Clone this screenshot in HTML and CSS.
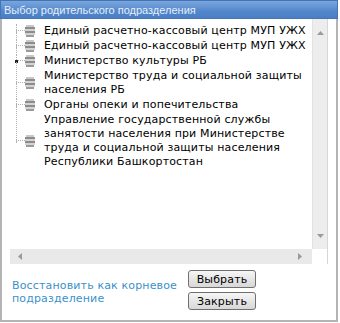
FILE: index.html
```html
<!DOCTYPE html>
<html>
<head>
<meta charset="utf-8">
<link rel="stylesheet" href="styles.css">
</head>
<body>
<div class="dialog">
  <div class="title">Выбор родительского подразделения</div>
  <div class="tree-box">
    <div class="tree-row">
      <div class="tree">
        <div class="node">
          <div class="conn"><div class="conn-top"></div><div class="conn-mid"></div><div class="conn-bot"></div></div>
          <svg class="icon" width="10" height="12" viewBox="0 0 10 12"><rect x="1" y="0" width="8" height="2" fill="#c8c8c8"/><rect x="0" y="2" width="10" height="2" fill="#8c8c8c"/><rect x="0" y="4" width="10" height="2" fill="#d4d4d4"/><rect x="0" y="6" width="10" height="2" fill="#8c8c8c"/><rect x="0" y="8" width="10" height="2" fill="#d4d4d4"/><rect x="1" y="10" width="8" height="2" fill="#9a9a9a"/></svg>
          <div class="label">Единый расчетно-кассовый центр МУП УЖХ</div>
        </div>
        <div class="node">
          <div class="conn"><div class="conn-top"></div><div class="conn-mid"></div><div class="conn-bot"></div></div>
          <svg class="icon" width="10" height="12" viewBox="0 0 10 12"><rect x="1" y="0" width="8" height="2" fill="#c8c8c8"/><rect x="0" y="2" width="10" height="2" fill="#8c8c8c"/><rect x="0" y="4" width="10" height="2" fill="#d4d4d4"/><rect x="0" y="6" width="10" height="2" fill="#8c8c8c"/><rect x="0" y="8" width="10" height="2" fill="#d4d4d4"/><rect x="1" y="10" width="8" height="2" fill="#9a9a9a"/></svg>
          <div class="label">Единый расчетно-кассовый центр МУП УЖХ</div>
        </div>
        <div class="node">
          <div class="conn"><div class="conn-top"></div><div class="conn-mid"><span class="dot"></span></div><div class="conn-bot"></div></div>
          <svg class="icon" width="10" height="12" viewBox="0 0 10 12"><rect x="1" y="0" width="8" height="2" fill="#c8c8c8"/><rect x="0" y="2" width="10" height="2" fill="#8c8c8c"/><rect x="0" y="4" width="10" height="2" fill="#d4d4d4"/><rect x="0" y="6" width="10" height="2" fill="#8c8c8c"/><rect x="0" y="8" width="10" height="2" fill="#d4d4d4"/><rect x="1" y="10" width="8" height="2" fill="#9a9a9a"/></svg>
          <div class="label">Министерство культуры РБ</div>
        </div>
        <div class="node">
          <div class="conn"><div class="conn-top"></div><div class="conn-mid"></div><div class="conn-bot"></div></div>
          <svg class="icon" width="10" height="12" viewBox="0 0 10 12"><rect x="1" y="0" width="8" height="2" fill="#c8c8c8"/><rect x="0" y="2" width="10" height="2" fill="#8c8c8c"/><rect x="0" y="4" width="10" height="2" fill="#d4d4d4"/><rect x="0" y="6" width="10" height="2" fill="#8c8c8c"/><rect x="0" y="8" width="10" height="2" fill="#d4d4d4"/><rect x="1" y="10" width="8" height="2" fill="#9a9a9a"/></svg>
          <div class="label">Министерство труда и социальной защиты населения РБ</div>
        </div>
        <div class="node">
          <div class="conn"><div class="conn-top"></div><div class="conn-mid"></div><div class="conn-bot"></div></div>
          <svg class="icon" width="10" height="12" viewBox="0 0 10 12"><rect x="1" y="0" width="8" height="2" fill="#c8c8c8"/><rect x="0" y="2" width="10" height="2" fill="#8c8c8c"/><rect x="0" y="4" width="10" height="2" fill="#d4d4d4"/><rect x="0" y="6" width="10" height="2" fill="#8c8c8c"/><rect x="0" y="8" width="10" height="2" fill="#d4d4d4"/><rect x="1" y="10" width="8" height="2" fill="#9a9a9a"/></svg>
          <div class="label">Органы опеки и попечительства</div>
        </div>
        <div class="node last">
          <div class="conn"><div class="conn-top"></div><div class="conn-mid"></div><div class="conn-bot"></div></div>
          <svg class="icon" width="10" height="12" viewBox="0 0 10 12"><rect x="1" y="0" width="8" height="2" fill="#c8c8c8"/><rect x="0" y="2" width="10" height="2" fill="#8c8c8c"/><rect x="0" y="4" width="10" height="2" fill="#d4d4d4"/><rect x="0" y="6" width="10" height="2" fill="#8c8c8c"/><rect x="0" y="8" width="10" height="2" fill="#d4d4d4"/><rect x="1" y="10" width="8" height="2" fill="#9a9a9a"/></svg>
          <div class="label">Управление государственной службы занятости населения при Министерстве труда и социальной защиты населения Республики Башкортостан</div>
        </div>
      </div>
      <div class="vscroll">
        <svg width="7" height="4" viewBox="0 0 7 4"><path d="M0 4 L3.5 0 L7 4 Z" fill="#9a9a9a"/></svg>
        <svg width="7" height="4" viewBox="0 0 7 4"><path d="M0 0 L3.5 4 L7 0 Z" fill="#9a9a9a"/></svg>
      </div>
    </div>
    <div class="hrow">
      <div class="hscroll">
        <svg width="4" height="7" viewBox="0 0 4 7"><path d="M4 0 L0 3.5 L4 7 Z" fill="#9a9a9a"/></svg>
        <svg width="4" height="7" viewBox="0 0 4 7"><path d="M0 0 L4 3.5 L0 7 Z" fill="#9a9a9a"/></svg>
      </div>
      <div class="corner"></div>
    </div>
  </div>
  <div class="footer">
    <a class="link" href="#">Восстановить как корневое подразделение</a>
    <div class="buttons">
      <button class="btn">Выбрать</button>
      <button class="btn">Закрыть</button>
    </div>
  </div>
</div>
</body>
</html>
```

FILE: styles.css
```css
html, body {
  margin: 0;
  padding: 0;
  background: #ffffff;
}
.dialog {
  width: 338px;
  height: 322px;
  box-sizing: border-box;
  border: 2px solid #b4b4b4;
  border-top: none;
  display: flex;
  flex-direction: column;
  font-family: "DejaVu Sans", Verdana, sans-serif;
  font-size: 11px;
  letter-spacing: 0.15px;
  color: #000;
}
.title {
  height: 19px;
  margin: 0 -2px;
  box-sizing: border-box;
  padding: 3px 0 0 3px;
  background: linear-gradient(#7ca6dc, #5287cc 60%, #4a7fc4);
  border: 1px solid #4274b8;
  color: #e6eef9;
  font-family: "Liberation Sans", Arial, sans-serif;
  font-size: 11px;
  letter-spacing: 0;
  line-height: 13px;
}
.tree-box {
  margin: 0 8px;
  height: 245px;
  display: flex;
  flex-direction: column;
  border-right: 1px solid #d6d6d6;
}
.tree-row {
  flex: 1;
  display: flex;
  min-height: 0;
}
.tree {
  flex: 1;
  padding-top: 5px;
  overflow: hidden;
}
.node {
  display: flex;
  align-items: stretch;
  margin-bottom: 1px;
}
.conn {
  width: 9px;
  margin-left: 6px;
  display: flex;
  flex-direction: column;
  flex: none;
}
.conn-top {
  flex: 1;
  border-left: 1px dotted #b0b0b0;
}
.conn-mid {
  height: 1px;
  border-top: 1px dotted #b0b0b0;
  border-left: 1px dotted #b0b0b0;
  display: flex;
  align-items: center;
}
.conn-bot {
  flex: 1;
  border-left: 1px dotted #b0b0b0;
}
.last .conn-bot {
  border-left-color: transparent;
}
.dot {
  width: 3px;
  height: 3px;
  margin-left: -2px;
  margin-top: -1px;
  background: #222;
  flex: none;
}
.icon {
  align-self: center;
  margin-right: 9px;
  flex: none;
}
.label {
  line-height: 14px;
  padding-right: 4px;
  flex: 1;
}
.vscroll {
  width: 15px;
  flex: none;
  background: #ededed;
  border-left: 1px solid #e2e2e2;
  display: flex;
  flex-direction: column;
  justify-content: space-between;
  align-items: center;
  padding: 12px 0 11px;
  box-sizing: border-box;
}
.hrow {
  display: flex;
  height: 15px;
  flex: none;
}
.hscroll {
  flex: 1;
  background: #e9e9e9;
  display: flex;
  justify-content: space-between;
  align-items: center;
  padding: 0 10px 0 8px;
}
.corner {
  width: 15px;
  background: #fff;
}
.footer {
  display: flex;
  padding: 6px 0 0 10px;
}
.link {
  width: 176px;
  color: #3a91c9;
  text-decoration: none;
  line-height: 13px;
  padding-top: 9px;
}
.buttons {
  display: flex;
  flex-direction: column;
  gap: 4px;
}
.btn {
  width: 68px;
  height: 18px;
  padding: 0;
  font-family: "DejaVu Sans", sans-serif;
  font-size: 11px;
  letter-spacing: 0.15px;
  color: #000;
  background: linear-gradient(#f6f6f6, #e6e6e6 50%, #d8d8d8);
  border: 1px solid #707070;
  border-radius: 3px;
}
```
